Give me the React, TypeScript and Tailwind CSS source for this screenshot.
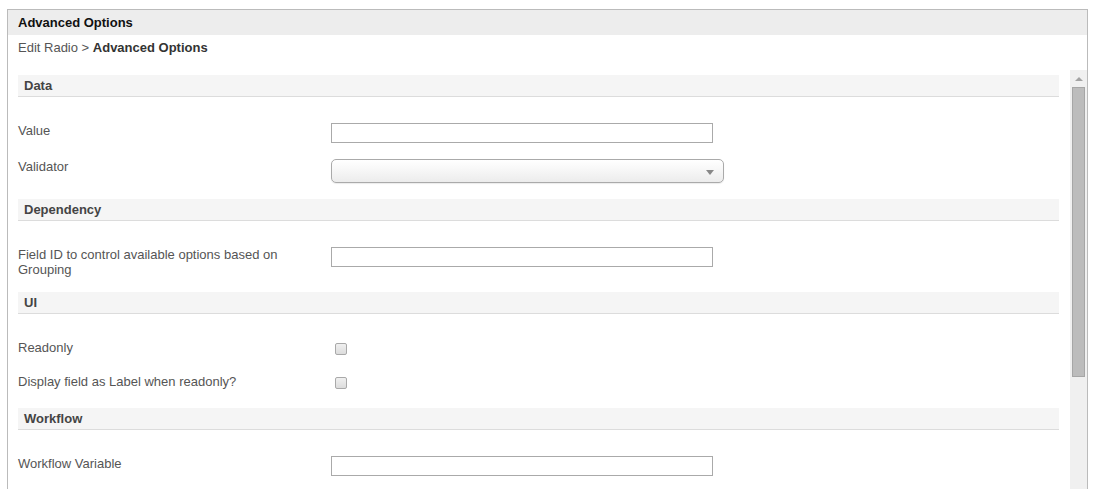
const TextBox = () => (
  <div className="w-[382px] h-[20px] border border-[#aaa] bg-white" />
);

const SelectBox = () => (
  <div className="relative w-[393px] h-[24px] rounded-[5px] border border-[#aaa] bg-gradient-to-b from-white via-[#f6f6f6] to-[#ececec] shadow-[0_1px_1px_rgba(0,0,0,0.08)]">
    <span className="absolute right-[9px] top-[10px] w-0 h-0 border-l-[4px] border-r-[4px] border-t-[5px] border-l-transparent border-r-transparent border-t-[#888]" />
  </div>
);

const CheckBox = () => (
  <div className="mt-[3px] ml-[4px] w-[12px] h-[12px] rounded-[2px] border border-[#a9a9a9] bg-gradient-to-b from-[#f0f0f0] to-[#dcdcdc]" />
);

const SectionHeader = ({ title }: { title: string }) => (
  <div className="h-[22px] bg-[#f5f5f5] border-b border-[#dcdcdc] pl-[6px] leading-[21px] font-bold text-[#444]">
    {title}
  </div>
);

const Row = ({
  label,
  children,
  tall,
  tight,
}: {
  label: string;
  children: React.ReactNode;
  tall?: boolean;
  tight?: boolean;
}) => (
  <div
    className={`flex items-start ${tight ? "mb-[15px]" : "mb-[16px]"} ${tall ? "h-[18px]" : ""}`}
  >
    <div className="w-[313px] pr-[20px] leading-[15px] text-[#555]">{label}</div>
    {children}
  </div>
);

const App = () => {
  return (
    <div className="h-[489px] overflow-hidden bg-white pt-[9px] pl-[7px] font-['Liberation_Sans',Arial,sans-serif] text-[13px]">
      <div className="w-[1081px] border-l border-t border-r border-[#bbb]">
        <div className="h-[25px] bg-[#ededed] pl-[10px] leading-[25px] font-bold text-[#111]">
          Advanced Options
        </div>
        <div className="h-[35px] pl-[10px] pt-[5px] leading-[15px] text-[#555]">
          Edit Radio &gt; <span className="font-bold text-[#333]">Advanced Options</span>
        </div>
        <div className="flex h-[419px]">
          <div className="flex-1 overflow-hidden pl-[10px] pr-[11px] pt-[5px]">
            <SectionHeader title="Data" />
            <div className="pt-[26px]">
              <Row label="Value">
                <TextBox />
              </Row>
              <Row label="Validator">
                <SelectBox />
              </Row>
            </div>

            <SectionHeader title="Dependency" />
            <div className="pt-[26px]">
              <Row label="Field ID to control available options based on Grouping" tight>
                <TextBox />
              </Row>
            </div>

            <SectionHeader title="UI" />
            <div className="pt-[26px]">
              <Row label="Readonly" tall>
                <CheckBox />
              </Row>
              <Row label="Display field as Label when readonly?" tall>
                <CheckBox />
              </Row>
            </div>

            <SectionHeader title="Workflow" />
            <div className="pt-[26px]">
              <Row label="Workflow Variable">
                <TextBox />
              </Row>
            </div>
          </div>

          {/* scrollbar */}
          <div className="w-[17px] bg-[#f0f0f0]">
            <div className="h-[17px] flex items-center justify-center">
              <span className="w-0 h-0 border-l-[4px] border-r-[4px] border-b-[4px] border-l-transparent border-r-transparent border-b-[#a3a3a3]" />
            </div>
            <div className="ml-[2px] w-[13px] h-[290px] bg-[#bcbcbc] border border-[#a6a6a6]" />
          </div>
        </div>
      </div>
    </div>
  );
};

export default App;
